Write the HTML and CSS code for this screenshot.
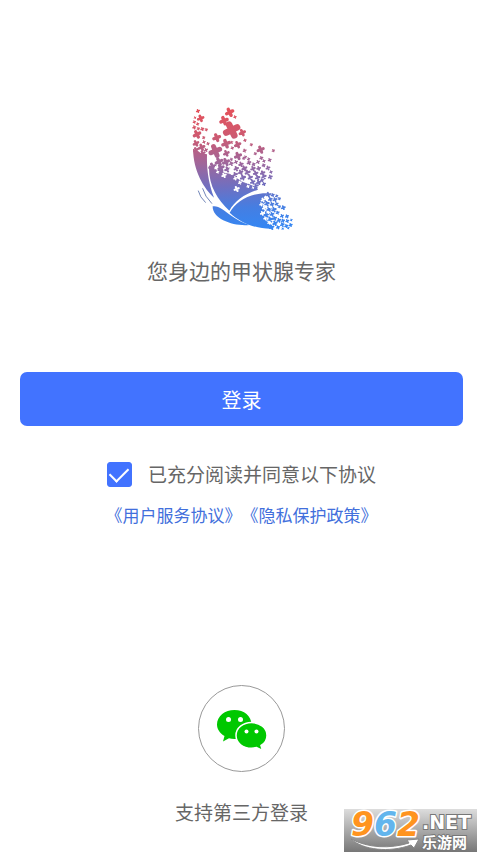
FILE: index.html
```html
<!DOCTYPE html>
<html lang="zh-CN">
<head>
<meta charset="utf-8">
<meta name="viewport" content="width=device-width, initial-scale=1">
<title>登录</title>
<link rel="stylesheet" href="styles.css">
</head>
<body>
<main class="page">
  <header class="brand">
    <svg class="logo" viewBox="5 0 360 405" aria-hidden="true">
      <defs>
        <linearGradient id="wing" gradientUnits="userSpaceOnUse" x1="150" y1="25" x2="165" y2="385">
          <stop offset="0" stop-color="#e5515a"/>
          <stop offset=".22" stop-color="#cf5a70"/>
          <stop offset=".45" stop-color="#a0669a"/>
          <stop offset=".65" stop-color="#706fc0"/>
          <stop offset=".83" stop-color="#457ee2"/>
          <stop offset="1" stop-color="#3586f2"/>
        </linearGradient>
      </defs>
      <g fill="url(#wing)">
        <path d="M38 146L50 151 62 160 80 163C79 198 82 244 101 293C70 264 39 213 38 146Z"/>
        <path d="M86 196L100 205 117 202 132 218 152 222 170 235 188 246 206 252 229 263 233 269C194 281 163 303 147 332C111 297 84 257 86 196Z"/>
        <path d="M148 338C167 306 207 278 263 280L250 292 258 304 247 314 258 326 247 339 262 350 258 363 271 372 277 386C229 388 181 369 148 338Z"/>
        <path d="M97 319C112 315 132 331 154 348C171 360 188 369 207 375C163 380 96 359 97 319Z"/>
      </g>
      <g class="antennae">
        <path d="M54 273Q58 291 75 307"/>
        <path d="M67 266Q73 289 94 310"/>
      </g>
      <g id="crosses"></g>
    </svg>
    <h1 class="slogan">您身边的甲状腺专家</h1>
  </header>

  <form class="login">
    <button class="submit" type="button">登录</button>
    <div class="consent">
      <input class="tick" id="agree" type="checkbox" checked>
      <label for="agree">已充分阅读并同意以下协议</label>
    </div>
    <nav class="terms" aria-label="协议">
      <a href="#service">《用户服务协议》</a>
      <a href="#privacy">《隐私保护政策》</a>
    </nav>
  </form>

  <section class="third-party">
    <button class="wechat" type="button" aria-label="微信登录">
      <svg viewBox="0 0 50 42" aria-hidden="true">
        <path fill="#00c800" d="M17.5 2C27 2 34.500 8 34.500 16.500C34.500 25 27 31 17.500 31Q14.500 31 12 30.300L6 33.500 7.500 28C3 25.300 0 21.300 0 16.500C0 8 8 2 17.500 2Z"/>
        <path fill="#00c800" stroke="#fff" stroke-width="1.500" d="M34.500 14.500C43 14.500 50 20 50 27.500C50 32 47.500 35.500 44 37.500L45.500 42.500 39.500 39.500Q37 40.300 34.500 40.300C26 40.300 19 35 19 27.500C19 20 26 14.500 34.500 14.500Z"/>
        <g fill="#fff"><circle cx="11.500" cy="11.500" r="2.500"/><circle cx="23.500" cy="11.500" r="2.500"/><circle cx="29.500" cy="23.500" r="2"/><circle cx="39.500" cy="23.500" r="2"/></g>
      </svg>
    </button>
    <p class="caption">支持第三方登录</p>
  </section>
</main>

<aside class="watermark">
  <svg viewBox="0 0 133 43" role="img" aria-label="962.NET 乐游网">
    <text class="mark-digits" x="7" y="27"><tspan fill="#ff941f">9</tspan><tspan fill="#62b5ed">6</tspan><tspan fill="#ff941f">2</tspan></text>
    <text class="mark-net" x="78" y="20">.NET</text>
    <path class="mark-swoosh" d="M7 30C24 39 46 40 65 34L63 31 75 30 70 39 67 36C45 44 19 41 7 30Z"/>
    <text class="mark-name" x="78" y="39">乐游网</text>
  </svg>
</aside>
<script src="crosses.js"></script>
</body>
</html>
```

FILE: styles.css
```css
* { box-sizing: border-box; }

body {
  margin: 0;
  min-height: 100vh;
  position: relative;
  background: #fff;
  color: #666;
  font-family: "Noto Sans CJK SC", sans-serif;
}

.page {
  display: flex;
  flex-direction: column;
  padding: 100px 20px 32px;
}

.brand,
.third-party {
  display: flex;
  flex-direction: column;
  align-items: center;
}

.logo {
  width: 120px;
  height: 135px;
}

.antennae {
  fill: none;
  stroke: #7286b8;
  stroke-width: 3;
  stroke-linecap: round;
}

.slogan {
  margin: 19px 0 0;
  font-size: 21px;
  line-height: 32px;
  font-weight: 400;
}

.login {
  display: flex;
  flex-direction: column;
  margin-top: 86px;
}

.submit {
  height: 54px;
  border: 0;
  border-radius: 7px;
  background: #4273ff;
  color: #fff;
  font-family: inherit;
  font-size: 20px;
}

.consent {
  display: flex;
  justify-content: center;
  align-items: center;
  gap: 16px;
  margin-top: 34px;
  font-size: 19px;
  line-height: 28px;
}

.tick {
  appearance: none;
  width: 25px;
  height: 25px;
  margin: 0;
  border-radius: 3px;
  border: 1px solid #4273ff;
  display: grid;
  place-items: center;
}

.tick:checked { background: #4273ff; }

.tick:checked::before {
  content: "";
  width: 16px;
  height: 9px;
  border-left: 2px solid #fff;
  border-bottom: 2px solid #fff;
  transform: translateY(-2px) rotate(-45deg);
}

.terms {
  display: flex;
  justify-content: center;
  margin-top: 15px;
  font-size: 17px;
  line-height: 24px;
}

.terms a {
  color: #426fdc;
  text-decoration: none;
}

.third-party { margin-top: 158px; }

.wechat {
  width: 87px;
  height: 87px;
  padding: 0;
  border: 1px solid #999;
  border-radius: 50%;
  background: #fff;
  display: grid;
  place-items: center;
}

.wechat svg {
  width: 50px;
  height: 42px;
  overflow: visible;
}

.caption {
  margin: 26px 0 0;
  font-size: 19px;
  line-height: 28px;
}

.watermark {
  position: absolute;
  right: 6px;
  bottom: 6px;
  width: 133px;
  height: 43px;
  background: linear-gradient(#ddd, #777);
}

.watermark svg {
  display: block;
  overflow: visible;
}

.mark-digits {
  font: italic 700 33px "DejaVu Sans", sans-serif;
  stroke: #fff;
  stroke-width: 3;
  stroke-linejoin: round;
  paint-order: stroke;
}

.mark-net,
.mark-name {
  fill: #fff;
  stroke: #777;
  stroke-width: 2;
  paint-order: stroke;
}

.mark-net { font: 700 19px "DejaVu Sans", sans-serif; }
.mark-name { font: 700 15px "Noto Sans CJK SC", sans-serif; }

.mark-swoosh {
  fill: #fff;
  stroke: #888;
  stroke-width: 1;
}
```

FILE: crosses.js
```js
// Each cross: centre x, centre y, radius.
const coloured = [
  [53,33,6],[44,53,4],[42,66,5],[61,55,11],[52,72,5],[42,82,6],[54,86,5],[66,87,6],[78,89,5],
  [50,103,13],[70,113,5],[47,130,10],[64,142,11],[83,131,5],[71,126,5],[77,150,6],[47,150,9],[67,160,9],
  [148,37,14],[164,51,5],[131,62,14],[154,90,26],[186,98,11],[194,121,5],[213,134,5],
  [109,113,13],[137,131,14],[172,134,11],[154,127,5],[105,153,20],[156,144,5],[138,160,10],
  [241,149,12],[225,161,5],[193,152,6],[173,168,12],[195,171,5],[279,152,5],[243,174,6],
  [116,185,13],[137,186,12],[153,178,5],[153,191,7],[167,186,6],[190,175,5],[205,177,5],[206,188,7],
  [233,186,6],[251,183,5],[268,180,6],[250,196,6],[96,200,12],[121,204,12],[182,193,8],[192,205,9],
  [220,193,6],[218,206,8],[235,205,7],[263,204,7],[272,216,5],[141,208,9],[168,206,8],
  [202,218,9],[226,220,8],[247,219,8],[251,230,8],[270,231,7],[210,233,8],[232,233,8],[245,241,6],
  [181,217,8],[165,224,8],[188,233,9],[217,246,8],[235,247,8],[251,252,6],[227,258,8],
  [264,284,8],[277,285,6],[289,288,5],[270,298,7],[284,299,7],[297,296,5],[260,311,8],[275,313,7],
  [289,312,6],[297,320,5],[309,323,7],[266,328,8],[281,329,8],[259,343,9],[275,343,7],[292,338,6],
  [305,348,6],[283,355,7],[270,359,9],[296,361,7],[308,362,6],[320,349,6],[321,363,6],[333,360,4],[284,370,8],
  [306,374,7],[318,378,6],[331,375,6],[274,382,8],[293,382,6],[307,386,4],[324,384,4]
];
const cutouts = [
  [108,204,6],[131,226,8],[150,208,5],[165,235,6],[153,220,5],[179,248,6],[169,267,9],
  [195,241,5],[203,259,5],[218,263,4],[176,228,5],[112,216,5],[200,247,4],
  [248,300,7],[243,313,6],[252,324,7],[246,340,7],[263,337,5],[255,355,6],[267,368,6],[270,321,5]
];
const layer = document.getElementById("crosses");

function draw([x, y, r], colour) {
  const arm = r * 0.7;
  const angle = (18 + (x * 7 + y * 3) % 10) * Math.PI / 180;
  const a = Math.cos(angle) * arm;
  const b = Math.sin(angle) * arm;
  const path = document.createElementNS("http://www.w3.org/2000/svg", "path");
  path.setAttribute("d", `M${x - a} ${y + b}L${x + a} ${y - b}M${x - b} ${y - a}L${x + b} ${y + a}`);
  path.setAttribute("stroke", colour);
  path.setAttribute("stroke-width", r * 0.75);
  path.setAttribute("stroke-linecap", "round");
  layer.append(path);
}

coloured.forEach(cross => draw(cross, "url(#wing)"));
cutouts.forEach(cross => draw(cross, "#fff"));
```
